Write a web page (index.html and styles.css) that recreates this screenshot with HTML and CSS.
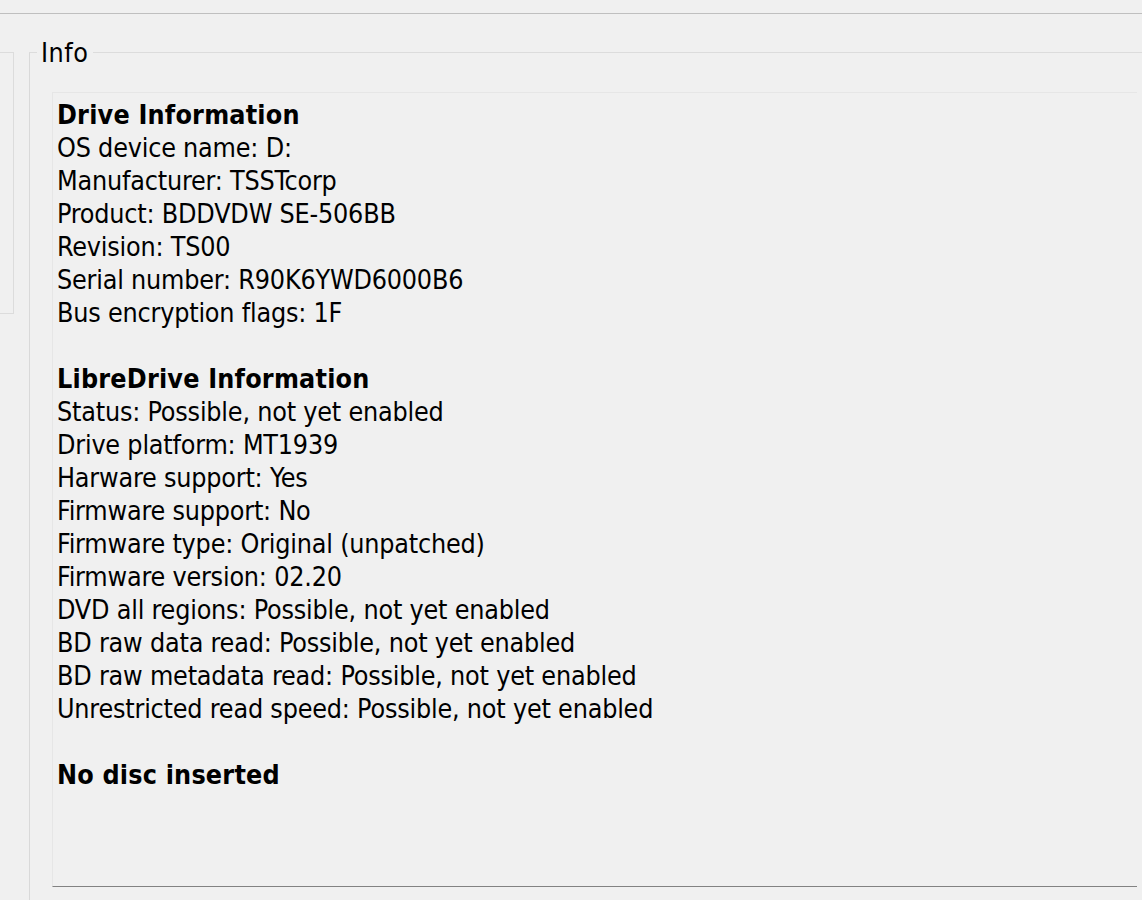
FILE: index.html
```html
<!DOCTYPE html>
<html>
<head>
<meta charset="utf-8">
<title>Info</title>
<link rel="stylesheet" href="styles.css">
</head>
<body>
<div class="topbar"></div>
<div class="main">
  <div class="side-panel"></div>
  <section class="group">
    <span class="group-title">Info</span>
    <div class="info-box">
      <div class="info-line heading">Drive Information</div>
      <div class="info-line">OS device name: D:</div>
      <div class="info-line">Manufacturer: TSSTcorp</div>
      <div class="info-line">Product: BDDVDW SE-506BB</div>
      <div class="info-line">Revision: TS00</div>
      <div class="info-line">Serial number: R90K6YWD6000B6</div>
      <div class="info-line">Bus encryption flags: 1F</div>
      <div class="info-line blank">&nbsp;</div>
      <div class="info-line heading">LibreDrive Information</div>
      <div class="info-line">Status: Possible, not yet enabled</div>
      <div class="info-line">Drive platform: MT1939</div>
      <div class="info-line">Harware support: Yes</div>
      <div class="info-line">Firmware support: No</div>
      <div class="info-line">Firmware type: Original (unpatched)</div>
      <div class="info-line">Firmware version: 02.20</div>
      <div class="info-line">DVD all regions: Possible, not yet enabled</div>
      <div class="info-line">BD raw data read: Possible, not yet enabled</div>
      <div class="info-line">BD raw metadata read: Possible, not yet enabled</div>
      <div class="info-line">Unrestricted read speed: Possible, not yet enabled</div>
      <div class="info-line blank">&nbsp;</div>
      <div class="info-line heading">No disc inserted</div>
    </div>
  </section>
</div>
</body>
</html>
```

FILE: styles.css
```css
html, body {
  margin: 0;
  padding: 0;
  height: 100%;
  overflow: hidden;
}

body {
  background: #f0f0f0;
  font-family: "DejaVu Sans", sans-serif;
  font-stretch: condensed;
  font-size: 26.67px;
  color: #000;
}

.topbar {
  height: 13px;
  border-bottom: 1px solid #bfbfbf;
}

.main {
  display: flex;
  align-items: flex-start;
  padding-top: 38px;
}

.side-panel {
  width: 13px;
  height: 260px;
  border: 1px solid #dcdcdc;
  border-left: none;
  flex: none;
}

.group {
  flex: 1;
  margin-left: 15px;
  height: calc(100vh - 53px);
  border-top: 1px solid #dcdcdc;
  border-left: 1px solid #d9d9d9;
  padding-left: 7px;
  display: flex;
  flex-direction: column;
  align-items: flex-start;
}

.group-title {
  display: inline-block;
  line-height: 33px;
  padding: 0 5px 0 4px;
  margin-top: -17px;
  background: #f0f0f0;
  letter-spacing: 0.5px;
}

.info-box {
  margin-left: 15px;
  margin-top: 23px;
  width: 1080px;
  height: 782px;
  border-top: 1px solid #e6e6e6;
  border-left: 1px solid #e6e6e6;
  border-bottom: 1px solid #828282;
  padding: 5px 0 6px 4px;
  box-sizing: content-box;
}

.info-line {
  line-height: 33px;
  white-space: nowrap;
  letter-spacing: -0.2px;
}

.heading {
  font-weight: bold;
  letter-spacing: 0.2px;
}
```
